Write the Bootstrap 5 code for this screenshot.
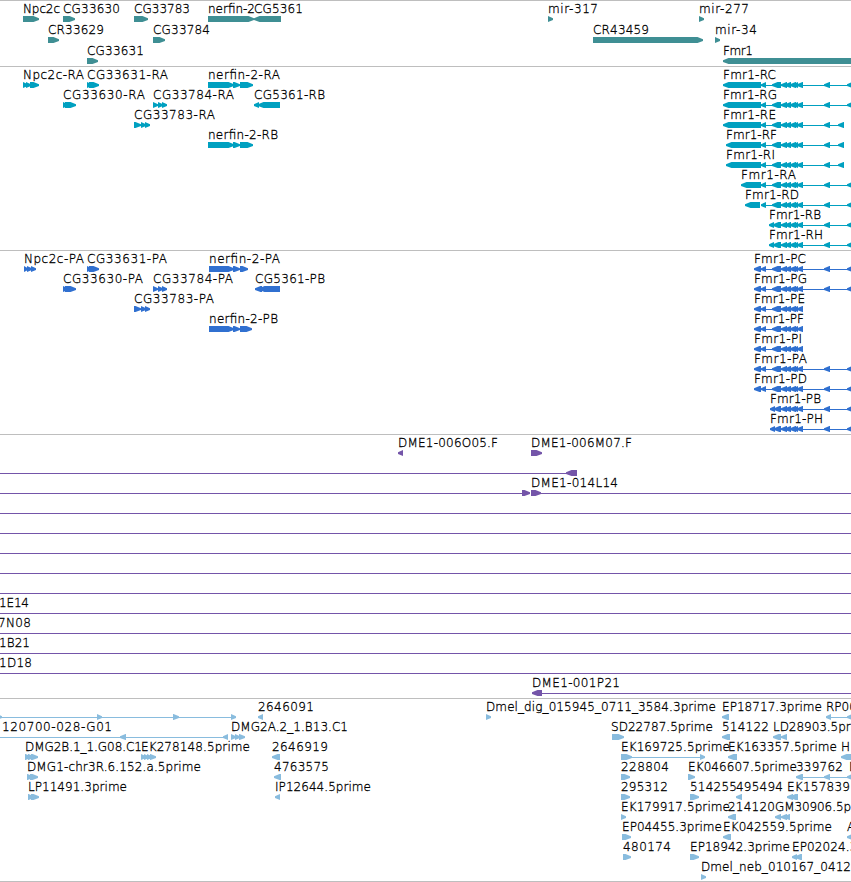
<!DOCTYPE html>
<html lang="en">
<head>
<meta charset="utf-8">
<meta name="viewport" content="width=device-width, initial-scale=1">
<title>Genome browser</title>
<link href="https://cdn.jsdelivr.net/npm/bootstrap@5.3.0/dist/css/bootstrap.min.css" rel="stylesheet">
<style>
  body { background: #fff; font-family: "DejaVu Sans", sans-serif; }
  .browser { height: 882px; }
  .track { border-top: 1px solid #bebebe; }
  .track rect { shape-rendering: crispEdges; }
  .track text { font-size: 12px; font-weight: 200; fill: #000; stroke: #000; stroke-width: .3px; white-space: pre; }
  .track-gene { height: 66px; color: #3f8f94; }
  .track-rna { height: 184px; color: #00a0c0; }
  .track-protein { height: 184px; color: #3070d0; }
  .track-bac { height: 264px; color: #7455a9; }
  .track-est { height: 183px; color: #89bcde; }
</style>
<script src="https://cdn.jsdelivr.net/npm/bootstrap@5.3.0/dist/js/bootstrap.bundle.min.js"></script>
</head>
<body class="overflow-hidden">
<main class="browser container-fluid p-0 d-flex flex-column overflow-hidden">
  <section class="track track-gene flex-shrink-0 overflow-hidden" data-track="gene" data-step="21"></section>
  <section class="track track-rna flex-shrink-0 overflow-hidden" data-track="rna" data-step="20"></section>
  <section class="track track-protein flex-shrink-0 overflow-hidden" data-track="protein" data-step="20"></section>
  <section class="track track-bac flex-shrink-0 overflow-hidden" data-track="bac" data-step="20"></section>
  <section class="track track-est flex-shrink-0 overflow-hidden" data-track="est" data-step="20"></section>
  <div class="track flex-shrink-0"></div>
</main>
<script>
// Feature: [row, label, label start, label end, spans]. A span is "from:to" plus
// ">" or "<" for the strand, or "-" for a connector. An end of 0 keeps natural width.
const tail = ' 766:851- 772:781< 781:787< 785:791< 790:796< 793:798< 797:803< 824:830< 847:853<';
const shortTail = ' 766:844- 772:781< 781:787< 785:791< 790:796< 793:798< 797:803< 824:830< 838:844<';
const codingTail = ' 766:803- 772:781< 781:787< 785:791< 790:796< 793:798< 797:803<';
const innerTail = ' 781:851- 781:787< 785:791< 790:796< 793:798< 797:803< 824:830< 847:853<';
const tracks = {
  gene: [
    [0,'Npc2c',23,60,'23:39>'],[0,'CG33630',63,120,'63:75>'],[0,'CG33783',134,190,'134:148>'],
    [0,'nerfin-2',208,255,'208:254>'],[0,'CG5361',254,303,'254:281<'],[0,'mir-317',548,598,'548:553>'],[0,'mir-277',699,749,'699:704>'],
    [1,'CR33629',48,104,'48:59>'],[1,'CG33784',153,210,'153:165>'],[1,'CR43459',593,649,'593:703>'],[1,'mir-34',715,757,'715:720>'],
    [2,'CG33631',87,144,'87:98>'],[2,'Fmr1',723,753,'723:860<']
  ],
  rna: [
    [0,'Npc2c-RA',23,84,'23:28> 26:31> 30:39>'],[0,'CG33631-RA',87,168,'87:92> 89:99>'],[0,'nerfin-2-RA',208,280,'208:234> 233:240> 240:253>'],[0,'Fmr1-RC',723,776,'723:761< 761:766<'+tail],
    [1,'CG33630-RA',63,145,'63:68> 65:76>'],[1,'CG33784-RA',153,234,'153:158> 158:163> 162:167>'],[1,'CG5361-RB',254,325,'254:259< 258:280<'],[1,'Fmr1-RG',723,777,'723:761< 761:766<'+tail],
    [2,'CG33783-RA',134,215,'134:141> 141:146> 145:150>'],[2,'Fmr1-RE',723,776,'723:761< 761:766<'+shortTail],
    [3,'nerfin-2-RB',208,278,'208:234> 233:240> 240:253>'],[3,'Fmr1-RF',726,777,'726:761< 761:766<'+shortTail],
    [4,'Fmr1-RI',726,775,'726:761< 761:766<'+shortTail],
    [5,'Fmr1-RA',741,796,'741:761< 761:766<'+tail],
    [6,'Fmr1-RD',745,799,'745:760< 761:766<'+tail],
    [7,'Fmr1-RB',769,821,'769:774< 773:781<'+innerTail],
    [8,'Fmr1-RH',769,823,'769:774< 773:781<'+innerTail]
  ],
  protein: [
    [0,'Npc2c-PA',24,84,'24:28> 27:32> 31:36>'],[0,'CG33631-PA',87,167,'87:92> 89:99>'],[0,'nerfin-2-PA',209,280,'209:234> 233:240> 240:248>'],[0,'Fmr1-PC',754,806,'754:761< 761:766<'+tail],
    [1,'CG33630-PA',63,143,'63:68> 65:76>'],[1,'CG33784-PA',153,233,'153:158> 158:163> 162:167>'],[1,'CG5361-PB',255,325,'255:262< 259:280<'],[1,'Fmr1-PG',754,807,'754:761< 761:766<'+tail],
    [2,'CG33783-PA',134,214,'134:141> 141:146> 145:150>'],[2,'Fmr1-PE',754,805,'754:761< 761:766<'+codingTail],
    [3,'nerfin-2-PB',209,278,'209:234> 233:240> 240:252>'],[3,'Fmr1-PF',754,804,'754:761< 761:766<'+codingTail],
    [4,'Fmr1-PI',754,802,'754:761< 761:766<'+codingTail],
    [5,'Fmr1-PA',754,807,'754:761< 761:766<'+tail],
    [6,'Fmr1-PD',754,807,'754:761< 761:766<'+tail],
    [7,'Fmr1-PB',770,821,'770:775< 774:781<'+innerTail],
    [8,'Fmr1-PH',770,823,'770:775< 774:781<'+innerTail]
  ],
  bac: [
    [0,'DME1-006O05.F',398,498,'398:403<'],[0,'DME1-006M07.F',531,632,'531:542>'],
    [1,'',0,0,'0:566- 566:577<'],
    [2,'DME1-014L14',531,618,'0:522- 522:530> 531:541> 541:851-'],
    [3,'',0,0,'0:851-'],[4,'',0,0,'0:851-'],[5,'',0,0,'0:851-'],[6,'',0,0,'0:851-'],[7,'',0,0,'0:851-'],
    [8,'1E14',-1,29,'0:851-'],[9,'7N08',-2,31,'0:851-'],[10,'1B21',-1,30,'0:851-'],[11,'1D18',-1,32,'0:851-'],
    [12,'DME1-001P21',532,620,'532:542< 542:851-']
  ],
  est: [
    [0,'2646091',258,314,'0:231- -3:2> 97:102> 173:179> 231:236> 258:263<'],
    [0,'Dmel_dig_015945_0711_3584.3prime',486,716,'486:491>'],[0,'EP18717.3prime',722,822,'722:729<'],[0,'RP00547.5prime',826,0,'826:851- 826:831< 847:853<'],
    [1,'120700-028-G01',2,112,'0:223- 120:126< 223:228<'],[1,'DMG2A.2_1.B13.C1',231,348,'231:236> 235:240> 239:245>'],[1,'SD22787.5prime',611,713,'612:624>'],[1,'514122',722,769,'722:730<'],[1,'LD28903.5prime',773,873,'773:781< 781:787<'],
    [2,'DMG2B.1_1.G08.C1',25,142,'25:31> 28:34> 31:38>'],[2,'EK278148.5prime',141,250,'141:146> 144:149> 147:152> 150:156>'],[2,'2646919',272,328,'272:280<'],[2,'EK169725.5prime',621,730,'621:632> 632:700- 700:705>'],[2,'EK163357.5prime',728,837,'728:737<'],[2,'H',841,0,'841:853<'],
    [3,'DMG1-chr3R.6.152.a.5prime',27,201,'27:33> 30:38>'],[3,'4763575',274,329,'274:281<'],[3,'228804',621,669,'621:630>'],[3,'EK046607.5prime',688,797,'688:695>'],[3,'339762',796,843,'796:851- 796:803< 824:830< 847:853<'],[3,'I',849,0,''],
    [4,'LP11491.3prime',28,127,'28:34> 31:39>'],[4,'IP12644.5prime',275,371,'275:280<'],[4,'295312',621,668,'621:630>'],[4,'514255',690,737,'690:699>'],[4,'495494',736,783,'736:742<'],[4,'EK157839',787,850,'787:793< 790:798<'],
    [5,'EK179917.5prime',621,730,'621:626>'],[5,'214120',728,775,'728:736<'],[5,'GM30906.5prime',775,878,'775:781< 781:787< 784:790<'],
    [6,'EP04455.3prime',622,722,'622:631>'],[6,'EK042559.5prime',723,832,'723:731<'],[6,'A',847,0,'847:855<'],
    [7,'480174',623,671,'623:631>'],[7,'EP18942.3prime',690,790,'690:699>'],[7,'EP02024.3prime',792,893,'792:797< 795:802<'],
    [8,'Dmel_neb_010167_0412',701,851,'701:706>']
  ]
};

function drawSpan(span, top) {
  const [, from, to, kind] = span.match(/^(-?\d+):(\d+)([<>-])$/);
  const a = +from, b = +to, mid = top + 3;
  if (kind === '-') return `<rect x="${a}" y="${mid}" width="${b - a}" height="1"/>`;
  const head = Math.min(5.5, b - a);
  const base = kind === '>' ? b - head : a + head;
  const tip = kind === '>' ? b : a;
  const back = kind === '>' ? a : b;
  return `<polygon points="${back},${top} ${base},${top} ${tip},${top + 2.2} ${tip},${top + 4} ${base},${top + 6} ${back},${top + 6}"/>`;
}

document.querySelectorAll('[data-track]').forEach(section => {
  const step = +section.dataset.step;
  let shapes = '', labels = '';
  for (const [row, label, start, end, spans] of tracks[section.dataset.track]) {
    const baseline = 12 + row * step;
    shapes += spans.split(' ').filter(Boolean).map(s => drawSpan(s, baseline + 3)).join('');
    if (label) {
      const fit = end ? ` textLength="${end - start}"` : '';
      labels += `<text x="${start}" y="${baseline}"${fit}>${label}</text>`;
    }
  }
  section.innerHTML = `<svg class="d-block w-100 h-100" fill="currentColor">${shapes}${labels}</svg>`;
});
</script>
</body>
</html>
